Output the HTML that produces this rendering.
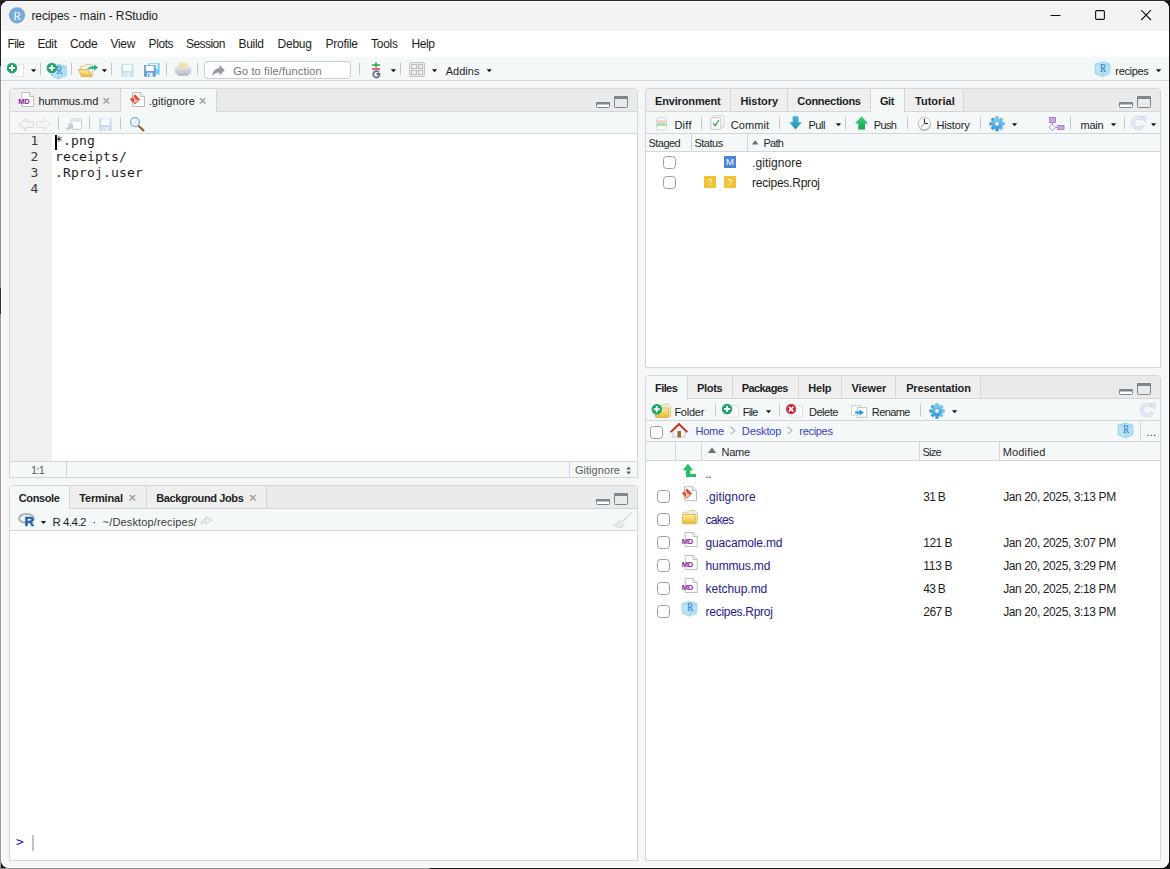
<!DOCTYPE html>
<html lang="en">
<head>
<meta charset="utf-8">
<title>recipes - main - RStudio</title>
<style>
*{box-sizing:border-box;margin:0;padding:0}
html,body{width:1170px;height:869px;overflow:hidden;background:#161617}
body{font-family:"Liberation Sans",sans-serif;font-size:12px;color:#1e1e1e;position:relative}
.a,.t,svg{position:absolute}
svg{overflow:visible}
.t{white-space:nowrap;line-height:14px;height:14px}
#win{position:absolute;left:1px;top:1px;width:1168px;height:867px;background:#f5f6f8;border-radius:8px;overflow:hidden;box-shadow:inset 0 0 0 1px rgba(255,255,255,.9)}
#title{position:absolute;left:0;top:0;width:100%;height:30px;background:#f3f3f3;box-shadow:inset 0 1px 0 #fff,inset 1px 0 0 #fff}
#menu{position:absolute;left:0;top:30px;width:100%;height:26px;background:#fff}
#tb{position:absolute;left:0;top:56px;width:100%;height:24px;background:#f5f8f9;border-bottom:1px solid #d3d7d9}
.pane{position:absolute;border:1px solid #d3d7da;border-radius:4px 4px 0 0;background:#fff;overflow:hidden}
.hdr{position:absolute;left:0;top:0;right:0;height:23px;background:#e9eaeb;border-bottom:1px solid #d3d7da}
.sub{position:absolute;left:0;right:0;top:23px;height:22px;background:#f4f8f9;border-bottom:1px solid #d3d7da}
.tab{position:absolute;top:0;height:22px;border-right:1px solid #d3d7da;background:#efeff0}
.tab.r{border-radius:0 3px 0 0}
.tab.sel{background:#f4f8f9;height:23px}
.sep{position:absolute;width:1px;height:16px;background:linear-gradient(rgba(190,195,199,0),#c3c7cb 22%,#c3c7cb 78%,rgba(190,195,199,0))}
.b{font-weight:bold}
.g{color:#747474}
.s{color:#5c5c5c}
.lnk{color:#25208f}
.crumb{color:#3640c0}
.mono{font-family:"DejaVu Sans Mono","Liberation Mono",monospace;letter-spacing:.174px}
.ln{color:#3a3a3a}
.pr{color:#1414e0}
.x{color:#a3a3a3;font-weight:bold}
.chev{color:#b0b0b0;transform:scaleX(.56);transform-origin:0 50%}
.g2{color:#3c3c3c}
.h{color:#2a2a2a}
.cb{position:absolute;width:13px;height:13px;border:1px solid #9d9d9d;border-radius:3.5px;background:#fff}
.badge{position:absolute;width:12px;height:12px;color:#fff;font-size:9.5px;line-height:12.5px;text-align:center}
</style>
</head>
<body>
<div class="a" style="left:0;top:0;width:1px;height:869px;background:linear-gradient(#232323 0,#232323 66px,#8e8e8e 66px,#8e8e8e 288px,#303030 288px,#303030 314px,#979797 314px)"></div>
<div class="a" style="left:0;top:868px;width:430px;height:1px;background:#8a8a8a"></div>
<div class="a" style="left:0;top:0;width:1169px;height:1px;background:#2b2b2b"></div>
<div id="win">
<div id="title"></div>
<div id="menu"></div>
<div id="tb">
  <div class="a" style="left:203px;top:4px;width:147px;height:18px;background:#fff;border:1px solid #cdd0d2;border-radius:3px"></div>
  <div class="sep" style="left:39px;top:4px"></div>
  <div class="sep" style="left:70px;top:4px"></div>
  <div class="sep" style="left:110px;top:4px"></div>
  <div class="sep" style="left:165px;top:4px"></div>
  <div class="sep" style="left:196px;top:4px"></div>
  <div class="sep" style="left:358px;top:4px"></div>
  <div class="sep" style="left:399px;top:4px"></div>
</div>

<!-- SOURCE PANE  (abs x=9..637, y=88..477) -->
<div class="pane" id="src" style="left:8px;top:87px;width:629px;height:390px">
  <div class="hdr"></div>
  <div class="tab" style="left:0;width:111px"></div>
  <div class="tab sel r" style="left:111px;width:96px"></div>
  <div class="sub"></div>
  <div class="sep" style="left:48px;top:26px"></div>
  <div class="sep" style="left:79px;top:26px"></div>
  <div class="sep" style="left:110px;top:26px"></div>
  <div class="a" style="left:0;top:45px;width:42px;height:327px;background:#f0f0f0"></div>
  <div class="a" style="left:45px;top:46px;width:2px;height:15px;background:#000"></div>
  <div class="a" style="left:0;right:0;top:372px;height:16px;background:#f4f8f9;border-top:1px solid #d3d7da"></div>
  <div class="a" style="left:56px;top:373px;width:1px;height:15px;background:#d3d7da"></div>
  <div class="a" style="left:559px;top:373px;width:1px;height:15px;background:#d3d7da"></div>
</div>

<!-- CONSOLE PANE (abs x=9..637, y=485..860) -->
<div class="pane" id="con" style="left:8px;top:484px;width:629px;height:376px">
  <div class="hdr"></div>
  <div class="tab sel" style="left:0;width:60px"></div>
  <div class="tab" style="left:60px;width:77px"></div>
  <div class="tab r" style="left:137px;width:120px"></div>
  <div class="sub"></div>
  <div class="a" style="left:22px;top:349px;width:2px;height:16px;background:#c4c4c4"></div>
</div>

<!-- GIT PANE (abs x=645..1160, y=88..367) -->
<div class="pane" id="git" style="left:644px;top:87px;width:516px;height:280px">
  <div class="hdr"></div>
  <div class="tab" style="left:0;width:85px"></div>
  <div class="tab" style="left:85px;width:57px"></div>
  <div class="tab" style="left:142px;width:83px"></div>
  <div class="tab sel" style="left:225px;width:34px"></div>
  <div class="tab r" style="left:259px;width:59px"></div>
  <div class="sub"></div>
  <div class="sep" style="left:55px;top:26px"></div>
  <div class="sep" style="left:133px;top:26px"></div>
  <div class="sep" style="left:199px;top:26px"></div>
  <div class="sep" style="left:261px;top:26px"></div>
  <div class="sep" style="left:334px;top:26px"></div>
  <div class="sep" style="left:424px;top:26px"></div>
  <div class="sep" style="left:478px;top:26px"></div>
  <div class="a" style="left:0;right:0;top:45px;height:18px;background:#f4f8f9;border-bottom:1px solid #d3d7da"></div>
  <div class="a" style="left:45px;top:45px;width:1px;height:17px;background:#d3d7da"></div>
  <div class="a" style="left:101px;top:45px;width:1px;height:17px;background:#d3d7da"></div>
  <div class="cb" style="left:17px;top:67px"></div>
  <div class="cb" style="left:17px;top:87px"></div>
  <div class="badge" style="left:78px;top:67px;background:#4c84d9">M</div>
  <div class="badge" style="left:58px;top:87px;background:#f1c232">?</div>
  <div class="badge" style="left:78px;top:87px;background:#f1c232">?</div>
</div>

<!-- FILES PANE (abs x=645..1160, y=375..860) -->
<div class="pane" id="fil" style="left:644px;top:374px;width:516px;height:486px">
  <div class="hdr"></div>
  <div class="tab sel" style="left:0;width:42px"></div>
  <div class="tab" style="left:42px;width:45px"></div>
  <div class="tab" style="left:87px;width:66px"></div>
  <div class="tab" style="left:153px;width:43px"></div>
  <div class="tab" style="left:196px;width:54px"></div>
  <div class="tab r" style="left:250px;width:85px"></div>
  <div class="sub"></div>
  <div class="sep" style="left:69px;top:26px"></div>
  <div class="sep" style="left:133px;top:26px"></div>
  <div class="sep" style="left:274px;top:26px"></div>
  <div class="a" style="left:0;right:0;top:45px;height:21px;background:#f4f8f9;border-bottom:1px solid #d3d7da"></div>
  <div class="a" style="left:494px;top:45px;width:1px;height:20px;background:#d3d7da"></div>
  <div class="a" style="left:0;right:0;top:66px;height:19px;background:#f4f8f9;border-bottom:1px solid #d3d7da"></div>
  <div class="a" style="left:29px;top:66px;width:1px;height:18px;background:#d3d7da"></div>
  <div class="a" style="left:55px;top:66px;width:1px;height:18px;background:#d3d7da"></div>
  <div class="a" style="left:273px;top:66px;width:1px;height:18px;background:#d3d7da"></div>
  <div class="a" style="left:353px;top:66px;width:1px;height:18px;background:#d3d7da"></div>
  <div class="cb" style="left:4px;top:50px"></div>
  <div class="cb" style="left:11px;top:114px"></div>
  <div class="cb" style="left:11px;top:137px"></div>
  <div class="cb" style="left:11px;top:160px"></div>
  <div class="cb" style="left:11px;top:183px"></div>
  <div class="cb" style="left:11px;top:206px"></div>
  <div class="cb" style="left:11px;top:229px"></div>
</div>

<!-- ICONS -->
<svg style="left:-1px;top:-1px" width="1170" height="869" viewBox="0 0 1170 869">
<defs>
  <linearGradient id="gFold" x1="0" y1="0" x2="0" y2="1"><stop offset="0" stop-color="#f9efa2"/><stop offset="1" stop-color="#ecb930"/></linearGradient>
  <linearGradient id="gGear" x1="0" y1="0" x2="0" y2="1"><stop offset="0" stop-color="#7ccbf1"/><stop offset="1" stop-color="#3a9ad6"/></linearGradient>
  <linearGradient id="gPull" x1="0" y1="0" x2="0" y2="1"><stop offset="0" stop-color="#45b8d6"/><stop offset="1" stop-color="#1f95ad"/></linearGradient>
  <linearGradient id="gPush" x1="0" y1="0" x2="0" y2="1"><stop offset="0" stop-color="#3dd07a"/><stop offset="1" stop-color="#0fa858"/></linearGradient>
  <path id="dd" d="M0 0h5.2l-2.6 3z" fill="#151515"/>
  <g id="gp"><circle r="5.2" fill="#119c5a"/><circle r="4.3" fill="none" stroke="#3fc088" stroke-width=".6"/><path d="M-3 0h6M0 -3v6" stroke="#fff" stroke-width="2"/></g>
  <g id="cube">
    <path d="M7.5 .1L14.9 2.3V11.6L7.5 14.75L.2 11.6V2.3z" fill="#bde6f7" stroke="#7fcbe7" stroke-width=".8" stroke-linejoin="round"/>
    <path d="M7.5 4.5L14.9 2.3V11.6L7.5 14.75z" fill="#afe0f5"/>
    <path d="M.2 2.3L7.5 4.5L14.9 2.3M7.5 4.5V14.75" fill="none" stroke="#8fd3ea" stroke-width=".7"/>
    <path d="M.2 11.6L7.5 9.4L14.9 11.6M7.5 9.4V.1" fill="none" stroke="#9fdaee" stroke-width=".5"/>
    <text x="5" y="9.8" font-family="Liberation Serif,serif" font-size="11.5" textLength="6.2" lengthAdjust="spacingAndGlyphs" fill="#3977c6">R</text>
  </g>
  <g id="doc"><path d="M.5 .5H8.5L12.5 4.5V14.5H.5z" fill="#fff" stroke="#bdbdbd"/><path d="M8.5 .5V4.5H12.5" fill="#f4f4f4" stroke="#bdbdbd"/></g>
  <g id="md"><use href="#doc" x="2.5"/><text x="-.4" y="12.2" font-family="Liberation Sans,sans-serif" font-weight="bold" font-size="7.6" letter-spacing="-.5" fill="#8c1d9e">MD</text></g>
  <g id="gitdoc"><use href="#doc" x="2"/><path d="M5 2.2L10.1 7.3L5 12.4L-.1 7.3z" fill="#ee4a2c"/><path d="M3.2 5.2L6.6 8.6M4.9 6.9V9.8" stroke="#fff" stroke-width=".9" fill="none"/><circle cx="3.4" cy="5.4" r=".9" fill="#fff"/><circle cx="6.6" cy="8.6" r=".9" fill="#fff"/><circle cx="4.9" cy="9.8" r=".9" fill="#fff"/></g>
  <g id="floppyD"><path d="M0 0H12.5V12.5H0z" fill="#c9def1"/><path d="M2 .8H10.5V6.5H2z" fill="#fafcfe"/><path d="M3.2 8.6H9.3V12.5H3.2z" fill="#e8f1f9"/><path d="M4.2 9.6H6V12.5H4.2z" fill="#c9def1"/></g>
  <g id="gear">
    <g fill="url(#gGear)" stroke="#3d97d2" stroke-width=".4"><rect x="-1.5" y="-7.4" width="3" height="14.8" rx=".6"/><rect x="-1.5" y="-7.4" width="3" height="14.8" rx=".6" transform="rotate(45)"/><rect x="-1.5" y="-7.4" width="3" height="14.8" rx=".6" transform="rotate(90)"/><rect x="-1.5" y="-7.4" width="3" height="14.8" rx=".6" transform="rotate(135)"/></g>
    <circle r="5.4" fill="url(#gGear)"/>
    <circle r="2.2" fill="#f4f8f9" stroke="#3d97d2" stroke-width=".5"/>
  </g>
  <g id="folder"><path d="M1 4.6V2.7Q1 2.2 1.5 2.2H7.2L8.6 .5H13L15.6 3.3V12.3Q15.6 12.8 15.1 12.8H13.6" fill="#faf6e4" stroke="#d9bc55" stroke-width=".8" stroke-linejoin="round"/><path d="M2 3.2H7.8L9.1 1.5H12.7L14.7 3.7V11.9H13.9V4.2H2z" fill="#e6eaef"/><rect x=".5" y="4.5" width="13.3" height="9.3" rx=".8" fill="url(#gFold)" stroke="#d6ae3c" stroke-width=".8"/></g>
  <g id="minp"><rect x=".5" y=".5" width="13" height="5" rx="1" fill="#fff" stroke="#7c868d"/><rect x="0" y="0" width="14" height="2.4" rx="1" fill="#7c868d"/></g>
  <g id="maxp"><rect x=".5" y=".5" width="13" height="11" rx="1" fill="none" stroke="#7c868d"/><rect x="0" y="0" width="14" height="3" rx="1" fill="#7c868d"/></g>
  <g id="refresh"><path d="M12.3 3.3A6.9 6.9 0 1 0 13.4 11.65L10.9 10.2A4 4 0 1 1 10.2 5.4zM9.4 1.9L14.9 1.3L14.7 7.4z" fill="#c0cadd" stroke="#c0cadd" stroke-width=".9" stroke-linejoin="round"/><path d="M12.3 3.3A6.9 6.9 0 1 0 13.4 11.65L10.9 10.2A4 4 0 1 1 10.2 5.4zM9.4 1.9L14.9 1.3L14.7 7.4z" fill="#e3e9f4"/></g>
  <path id="sort" d="M0 5.5L4.2 0L8.4 5.5z" fill="#6d6f77"/>
</defs>

<!-- title bar -->
<circle cx="17" cy="15.3" r="8.1" fill="#75aadb"/>
<text x="17.2" y="19.5" font-family="Liberation Serif,serif" font-size="11.8" text-anchor="middle" fill="#fff" opacity=".95">R</text>
<path d="M1050.5 15.5H1060.5" stroke="#111" stroke-width="1"/>
<rect x="1095.6" y="10.6" width="8.8" height="8.8" rx="1.2" fill="none" stroke="#111" stroke-width="1.1"/>
<path d="M1141.2 10.2L1151 20M1151 10.2L1141.2 20" stroke="#111" stroke-width="1.1"/>

<!-- main toolbar -->
<rect x="12.5" y="64.5" width="11" height="12" fill="#fff" stroke="#e3e3e3"/>
<use href="#gp" x="12" y="68"/>
<use href="#dd" x="31" y="69.2"/>
<use href="#cube" x="51.2" y="64.2"/>
<use href="#gp" x="51.8" y="68"/>
<!-- open folder -->
<g transform="translate(78,64)">
  <path d="M2.4 6V3Q2.4 2.3 3.1 2.3H6.2L7.8 .6H13Q14.4 .6 14.4 1.7V12" fill="#faf8ef" stroke="#d9b95a" stroke-width=".8"/>
  <path d="M4 3.6H7L8.4 2H13V10H4z" fill="#eceef2"/>
  <path d="M.5 5.6H10.1L14.3 12.6H3.5z" fill="url(#gFold)" stroke="#d4a93a" stroke-width=".8" stroke-linejoin="round"/>
  <path d="M9.3 5.5C10.6 3.3 12.8 2.2 16.2 2.3V.5L20 3.5L16.2 6.8V4.9C13.6 4.6 11.4 4.8 9.3 5.5z" fill="#1db385"/>
</g>
<use href="#dd" x="101.8" y="69.2"/>
<use href="#floppyD" x="121.2" y="64.2"/>
<!-- save all -->
<g transform="translate(144,63.2)">
  <path d="M4.4 0H15.7V11.3H4.4z" fill="#79cdef"/><path d="M6 .7H13.6V5.5H6z" fill="#e9f7fd"/>
  <path d="M0 1.9H11.6V13.5H0z" fill="#689fd8"/><path d="M1.8 2.6H9.8V7.8H1.8z" fill="#fff"/><path d="M3 9.6H8.6V13.5H3z" fill="#eaf2fa"/><path d="M3.9 10.5H5.6V13.5H3.9z" fill="#689fd8"/>
</g>
<!-- printer -->
<g transform="translate(174.8,62.2)">
  <path d="M3.7 0H13.1V7H3.7z" fill="#f1dfb0"/><path d="M3.7 0H13.1V1.2H3.7z" fill="#f6e9c6"/>
  <rect x="0" y="4.6" width="16.4" height="7.2" rx="2.6" fill="#d6dce7"/>
  <path d="M3 4.6H13.8V6.6H3z" fill="#f1dfb0" opacity=".85"/>
  <path d="M.4 8.4H16V10.4Q16 11.8 14 11.8H2.4Q.4 11.8 .4 10.4z" fill="#c5cbd8"/>
  <rect x="2.6" y="11.4" width="11.2" height="2.2" rx=".8" fill="#b4b8c2"/>
</g>
<!-- goto arrow -->
<path d="M212.2 76.4C212.6 71 216 68 219.4 68V64.8L224.8 70.2L219.4 75.4V72.4C216.4 72.2 213.8 73.6 212.2 76.4z" fill="#9799a6"/>
<!-- git (vcs) -->
<path d="M372 65H380M376 62.3V67.6" stroke="#2aa84a" stroke-width="1.7"/>
<path d="M372 69H380" stroke="#d9363a" stroke-width="1.6"/>
<path d="M379 72.4A3.2 3.2 0 1 0 379.4 75.4V74H376.4" fill="none" stroke="#65758a" stroke-width="1.8"/>
<use href="#dd" x="390.8" y="69.2"/>
<!-- panes grid -->
<rect x="409.5" y="62.5" width="15" height="14" rx="1.6" fill="#ebebee" stroke="#c4c4c9" stroke-width="1"/>
<path d="M411.5 64.5h5v4h-5zM418.5 64.5h4v4h-4zM411.5 70.5h5v4h-5zM418.5 70.5h4v4h-4z" fill="#efeff2" stroke="#bcbcc1" stroke-width="1" shape-rendering="crispEdges"/>
<use href="#dd" x="432" y="69.2"/>
<use href="#dd" x="486.6" y="69.2"/>
<use href="#cube" x="1095" y="61.8"/>
<use href="#dd" x="1156" y="69.2"/>

<!-- source pane -->
<use href="#md" x="18.7" y="92"/>
<use href="#gitdoc" x="130" y="92"/>
<path d="M19.3 124.6L26 118.6V121.8H33.6V127.4H26V130.6z" fill="#f3f3f3" stroke="#cfcfcf" stroke-width=".9"/>
<path d="M50.7 124.6L44 118.6V121.8H36.6V127.4H44V130.6z" fill="#f6f6f6" stroke="#dcdcdc" stroke-width=".9"/>
<g transform="translate(66,118.4)">
  <rect x="4.9" y=".5" width="10.6" height="10.4" rx="1.8" fill="#fafcfd" stroke="#c3ccd5"/>
  <path d="M5.4 3.4V2.3Q5.4 1 6.7 1H13.7Q15 1 15 2.3V3.4z" fill="#d5e4f1"/>
  <path d="M.6 10.2L3.6 7.2L2.2 5.8H6.6V10.2L5.2 8.8L2.2 11.8z" fill="#c9ced6" stroke="#aab0ba" stroke-width=".5"/>
</g>
<use href="#floppyD" x="99.2" y="118.4"/>
<!-- magnifier -->
<path d="M138.4 125.8L143.4 130.4" stroke="#9b602b" stroke-width="2.2" stroke-linecap="round"/>
<circle cx="135" cy="122.1" r="4.5" fill="#e6f1fa" stroke="#7fadd6" stroke-width="1.2"/>
<path d="M132.4 121A2.8 2.8 0 0 1 135 119.2" fill="none" stroke="#fff" stroke-width="1.1"/>
<use href="#minp" x="596" y="102"/>
<use href="#maxp" x="614" y="96"/>
<!-- status updown -->
<path d="M626.2 469.4L628.6 466.4L631 469.4zM626.2 471.6L628.6 474.6L631 471.6z" fill="#5f5f5f"/>

<!-- console pane -->
<ellipse cx="26.4" cy="518.4" rx="7.3" ry="4.4" fill="none" stroke="#b1b3b7" stroke-width="2.2"/>
<text x="24.6" y="525.7" font-family="Liberation Sans,sans-serif" font-weight="bold" font-size="13.2" fill="#1f63b5" stroke="#1f63b5" stroke-width=".5">R</text>
<use href="#dd" x="40.9" y="521"/>
<path d="M201 524.4C201.4 521 203.6 519.4 206.2 519.4V516.6L211.8 520.4L206.2 524V521.6C204 521.6 202.4 522.4 201 524.4z" fill="#f2f2f2" stroke="#c4c4c4" stroke-width=".8" stroke-linejoin="round"/>
<use href="#minp" x="596" y="499"/>
<use href="#maxp" x="614" y="493"/>
<!-- broom -->
<g opacity=".8"><path d="M631.6 512.6L622.6 521.4" stroke="#c9ccd0" stroke-width="1.3"/><path d="M619.4 520L624 524.6L621.6 528L613.2 525.4C616.4 524.6 618.2 522.6 619.4 520z" fill="#e3e5e8" stroke="#c3c6ca" stroke-width=".7"/></g>

<!-- git pane -->
<g transform="translate(656,117.4)"><rect x=".5" y=".5" width="10" height="12" rx="1.2" fill="#fff" stroke="#d4d4d4"/><path d="M1.2 2.8H9.8V5.3H1.2z" fill="#f6c9c9"/><path d="M1.2 5.6H9.8V8.6H1.2z" fill="#a9dfa9"/></g>
<g transform="translate(710.4,115.2)"><rect x="3.5" y=".5" width="10" height="11.6" rx="1" fill="#fff" stroke="#cfcfcf"/><rect x=".5" y="2.5" width="10" height="11.6" rx="1" fill="#fff" stroke="#c4c4c4"/><path d="M2.8 8L4.8 10.4L8.6 4.8" fill="none" stroke="#3f9b3f" stroke-width="1.3"/></g>
<path d="M792.6 116.2H798.5V122.2H801.9L795.55 129.5L789.2 122.2H792.6z" fill="url(#gPull)"/>
<use href="#dd" x="835.8" y="123.3"/>
<path d="M861.6 116.2L868.1 123.4H865V129.6H858.3V123.4H855.1z" fill="url(#gPush)"/>
<g><circle cx="924.4" cy="123.6" r="6.2" fill="#fbfbfb" stroke="#b9b9b9" stroke-width=".9"/><path d="M919 127.5A6.2 6.2 0 0 0 930.4 125.4" fill="none" stroke="#a3a3a3" stroke-width=".9"/><path d="M924.4 118.8V123.6H928.2" fill="none" stroke="#222" stroke-width="1"/><path d="M924.4 123.6L920.9 127.2" stroke="#e35b5b" stroke-width=".9"/></g>
<use href="#gear" x="997" y="123.8"/>
<use href="#dd" x="1012" y="123.3"/>
<g fill="#c8a8de" stroke="#a070c4" stroke-width=".8"><rect x="1049.4" y="117.4" width="6.2" height="5"/><rect x="1057.8" y="125.4" width="6.2" height="4.2"/><path d="M1052.5 124.2L1055.7 127.4L1052.5 130.6L1049.3 127.4z" fill="#fff"/><path d="M1052.5 122.4V124.2M1055.7 127.4H1057.8" fill="none"/></g>
<use href="#dd" x="1111" y="123.3"/>
<use href="#refresh" x="1131" y="114.8"/>
<use href="#dd" x="1151" y="123.3"/>
<use href="#minp" x="1119" y="102"/>
<use href="#maxp" x="1137" y="96"/>
<use href="#sort" x="751.8" y="140.2" transform="translate(150.4 28) scale(.8)"/>

<!-- files pane -->
<use href="#minp" x="1119" y="389"/>
<use href="#maxp" x="1137" y="383"/>
<g transform="translate(655,403.6)"><use href="#folder"/></g>
<use href="#gp" x="656.8" y="409.3"/>
<rect x="727.9" y="405.5" width="10.6" height="11.6" fill="#fff" stroke="#e0e0e0"/>
<use href="#gp" x="727.1" y="409"/>
<use href="#dd" x="766" y="410.3"/>
<rect x="791.5" y="405.5" width="11" height="11.6" fill="#fff" stroke="#e0e0e0"/>
<circle cx="791.1" cy="409.1" r="5.1" fill="#c4152c"/><circle cx="791.1" cy="409.1" r="4.2" fill="none" stroke="#e56a78" stroke-width=".6"/>
<path d="M788.9 406.9L793.3 411.3M793.3 406.9L788.9 411.3" stroke="#fff" stroke-width="1.8"/>
<g><rect x="851.5" y="405.5" width="9" height="9.6" fill="#fff" stroke="#cfcfcf"/><rect x="857.5" y="407.5" width="9.2" height="9.8" fill="#fff" stroke="#c4c4c4"/><path d="M855 411.4H859.4V409.6L863.8 412.5L859.4 415.4V413.6H855z" fill="#1d9ae6"/></g>
<use href="#gear" x="937" y="411"/>
<use href="#dd" x="952" y="410.3"/>
<use href="#refresh" x="1140" y="401.8"/>
<!-- home -->
<g><path d="M672.8 431.4V437.3H685.2V431.4L679 425.6z" fill="#f3f3f3" stroke="#b9b9b9" stroke-width=".7"/><path d="M677.4 431H681V437.3H677.4z" fill="#a8672f"/><path d="M670.6 432.2L679 424L687.4 432.2" fill="none" stroke="#c3301c" stroke-width="1.8" stroke-linejoin="miter"/></g>
<use href="#cube" x="1118" y="423"/>
<use href="#sort" x="707.8" y="447.4"/>
<!-- up arrow -->
<path d="M687.9 463.8L693.2 470.2H690.3V474.1H696V477H686V470.2H682.8z" fill="#22c064"/>
<use href="#gitdoc" x="682" y="486.2"/>
<use href="#folder" x="682" y="510"/>
<use href="#md" x="682.2" y="532"/>
<use href="#md" x="682.2" y="555"/>
<use href="#md" x="682.2" y="578"/>
<use href="#cube" x="682" y="601.4"/>
</svg>

<!-- TEXT -->
<span class="t" style="left:30.4px;top:8.03px;letter-spacing:-0.092px">recipes - main - RStudio</span>
<span class="t" style="left:6.6px;top:36.03px;letter-spacing:-0.648px">File</span>
<span class="t" style="left:36.4px;top:36.03px;letter-spacing:-0.362px">Edit</span>
<span class="t" style="left:69px;top:36.03px;letter-spacing:-0.363px">Code</span>
<span class="t" style="left:109.4px;top:36.03px;letter-spacing:-0.266px">View</span>
<span class="t" style="left:147.6px;top:36.03px;letter-spacing:-0.422px">Plots</span>
<span class="t" style="left:185px;top:36.03px;letter-spacing:-0.551px">Session</span>
<span class="t" style="left:237.5px;top:36.03px;letter-spacing:-0.297px">Build</span>
<span class="t" style="left:276.5px;top:36.03px;letter-spacing:-0.219px">Debug</span>
<span class="t" style="left:324.5px;top:36.03px;letter-spacing:-0.253px">Profile</span>
<span class="t" style="left:370px;top:36.03px;letter-spacing:-0.254px">Tools</span>
<span class="t" style="left:410.5px;top:36.03px;letter-spacing:-0.396px">Help</span>
<span class="t g" style="left:232.2px;top:63.36px;font-size:11px;letter-spacing:0.161px">Go to file/function</span>
<span class="t" style="left:444.7px;top:63.36px;font-size:11px;letter-spacing:0.012px">Addins</span>
<span class="t" style="left:1114.3px;top:63.36px;font-size:11px;letter-spacing:-0.328px">recipes</span>
<span class="t" style="left:37.5px;top:93.36px;font-size:11px;letter-spacing:-0.091px">hummus.md</span>
<span class="t x" style="left:101.6px;top:92.7px;font-size:13px">×</span>
<span class="t" style="left:147.7px;top:93.36px;font-size:11px;letter-spacing:0.104px">.gitignore</span>
<span class="t x" style="left:197.8px;top:92.7px;font-size:13px">×</span>
<span class="t s" style="left:30px;top:462.36px;font-size:11px;letter-spacing:-0.750px">1:1</span>
<span class="t s" style="left:573.9px;top:462.36px;font-size:11px;letter-spacing:0.057px">Gitignore</span>
<span class="t mono ln" style="left:29.5px;top:132.7px;font-size:13px">1</span>
<span class="t mono" style="left:54px;top:132.7px;font-size:13px">*.png</span>
<span class="t mono ln" style="left:29.5px;top:148.7px;font-size:13px">2</span>
<span class="t mono" style="left:54px;top:148.7px;font-size:13px">receipts/</span>
<span class="t mono ln" style="left:29.5px;top:164.7px;font-size:13px">3</span>
<span class="t mono" style="left:54px;top:164.7px;font-size:13px">.Rproj.user</span>
<span class="t mono ln" style="left:29.5px;top:180.7px;font-size:13px">4</span>
<span class="t b" style="left:17.8px;top:490.36px;font-size:11px;letter-spacing:-0.401px">Console</span>
<span class="t b" style="left:78.3px;top:490.36px;font-size:11px;letter-spacing:-0.190px">Terminal</span>
<span class="t x" style="left:127.6px;top:490.2px;font-size:13px">×</span>
<span class="t b" style="left:155.2px;top:490.36px;font-size:11px;letter-spacing:-0.379px">Background Jobs</span>
<span class="t x" style="left:247.9px;top:490.2px;font-size:13px">×</span>
<span class="t" style="left:51.5px;top:514.2px;font-size:11.5px;letter-spacing:-0.513px">R 4.4.2</span>
<span class="t" style="left:91.6px;top:514.36px;font-size:11px">·</span>
<span class="t g2" style="left:101.6px;top:513.86px;font-size:11px;letter-spacing:0.153px">~/Desktop/recipes/</span>
<span class="t mono pr" style="left:15px;top:833.7px;font-size:13px">&gt;</span>
<span class="t b" style="left:654px;top:93.36px;font-size:11px;letter-spacing:-0.153px">Environment</span>
<span class="t b" style="left:739.4px;top:93.36px;font-size:11px;letter-spacing:-0.018px">History</span>
<span class="t b" style="left:796.3px;top:93.36px;font-size:11px;letter-spacing:-0.292px">Connections</span>
<span class="t b" style="left:879px;top:93.36px;font-size:11px;letter-spacing:-0.441px">Git</span>
<span class="t b" style="left:914px;top:93.36px;font-size:11px;letter-spacing:0.026px">Tutorial</span>
<span class="t" style="left:673.4px;top:116.86px;font-size:11px;letter-spacing:0.263px">Diff</span>
<span class="t" style="left:729.7px;top:116.86px;font-size:11px;letter-spacing:0.082px">Commit</span>
<span class="t" style="left:807.4px;top:116.86px;font-size:11px;letter-spacing:-0.415px">Pull</span>
<span class="t" style="left:872.8px;top:116.86px;font-size:11px;letter-spacing:-0.626px">Push</span>
<span class="t" style="left:935.5px;top:116.86px;font-size:11px;letter-spacing:-0.172px">History</span>
<span class="t" style="left:1079.5px;top:116.86px;font-size:11px;letter-spacing:-0.248px">main</span>
<span class="t h" style="left:647.5px;top:134.86px;font-size:11px;letter-spacing:-0.535px">Staged</span>
<span class="t h" style="left:693.4px;top:134.86px;font-size:11px;letter-spacing:-0.477px">Status</span>
<span class="t h" style="left:762.4px;top:134.86px;font-size:11px;letter-spacing:-0.680px">Path</span>
<span class="t" style="left:751px;top:154.53px;letter-spacing:0.069px">.gitignore</span>
<span class="t" style="left:751px;top:174.53px;letter-spacing:-0.225px">recipes.Rproj</span>
<span class="t b" style="left:654px;top:380.36px;font-size:11px;letter-spacing:-0.570px">Files</span>
<span class="t b" style="left:696px;top:380.36px;font-size:11px;letter-spacing:-0.302px">Plots</span>
<span class="t b" style="left:740.8px;top:380.36px;font-size:11px;letter-spacing:-0.595px">Packages</span>
<span class="t b" style="left:807.2px;top:380.36px;font-size:11px;letter-spacing:-0.148px">Help</span>
<span class="t b" style="left:850.6px;top:380.36px;font-size:11px;letter-spacing:-0.136px">Viewer</span>
<span class="t b" style="left:905.2px;top:380.36px;font-size:11px;letter-spacing:-0.176px">Presentation</span>
<span class="t" style="left:673.4px;top:404.36px;font-size:11px;letter-spacing:-0.237px">Folder</span>
<span class="t" style="left:741.7px;top:404.36px;font-size:11px;letter-spacing:-0.678px">File</span>
<span class="t" style="left:807.9px;top:404.36px;font-size:11px;letter-spacing:-0.459px">Delete</span>
<span class="t" style="left:870.8px;top:404.36px;font-size:11px;letter-spacing:-0.596px">Rename</span>
<span class="t crumb" style="left:694.5px;top:423.36px;font-size:11px;letter-spacing:-0.281px">Home</span>
<span class="t crumb" style="left:740.8px;top:423.36px;font-size:11px;letter-spacing:-0.110px">Desktop</span>
<span class="t crumb" style="left:798.3px;top:423.36px;font-size:11px;letter-spacing:-0.311px">recipes</span>
<span class="t chev" style="left:728.6px;top:423.38px;font-size:17px">&gt;</span>
<span class="t chev" style="left:786.4px;top:423.38px;font-size:17px">&gt;</span>
<span class="t" style="left:1145.5px;top:424.36px;font-size:11px;letter-spacing:0.164px">...</span>
<span class="t h" style="left:720.5px;top:444.36px;font-size:11px;letter-spacing:-0.281px">Name</span>
<span class="t h" style="left:921.4px;top:444.36px;font-size:11px;letter-spacing:-0.750px">Size</span>
<span class="t h" style="left:1001.7px;top:444.36px;font-size:11px;letter-spacing:0.160px">Modified</span>
<span class="t lnk" style="left:704.3px;top:466.03px;letter-spacing:-0.750px">..</span>
<span class="t lnk" style="left:704.6px;top:489.03px;letter-spacing:0.069px">.gitignore</span>
<span class="t" style="left:922.3px;top:489.03px;letter-spacing:-0.750px">31 B</span>
<span class="t" style="left:1002.2px;top:489.03px;letter-spacing:-0.388px">Jan 20, 2025, 3:13 PM</span>
<span class="t lnk" style="left:704.6px;top:512.03px;letter-spacing:-0.740px">cakes</span>
<span class="t lnk" style="left:704.6px;top:535.03px;letter-spacing:-0.174px">guacamole.md</span>
<span class="t" style="left:922.3px;top:535.03px;letter-spacing:-0.515px">121 B</span>
<span class="t" style="left:1002.2px;top:535.03px;letter-spacing:-0.388px">Jan 20, 2025, 3:07 PM</span>
<span class="t lnk" style="left:704.6px;top:558.03px;letter-spacing:-0.154px">hummus.md</span>
<span class="t" style="left:922.3px;top:558.03px;letter-spacing:-0.292px">113 B</span>
<span class="t" style="left:1002.2px;top:558.03px;letter-spacing:-0.388px">Jan 20, 2025, 3:29 PM</span>
<span class="t lnk" style="left:704.6px;top:581.03px;letter-spacing:-0.039px">ketchup.md</span>
<span class="t" style="left:922.3px;top:581.03px;letter-spacing:-0.750px">43 B</span>
<span class="t" style="left:1002.2px;top:581.03px;letter-spacing:-0.388px">Jan 20, 2025, 2:18 PM</span>
<span class="t lnk" style="left:704.6px;top:604.03px;letter-spacing:-0.284px">recipes.Rproj</span>
<span class="t" style="left:922.3px;top:604.03px;letter-spacing:-0.515px">267 B</span>
<span class="t" style="left:1002.2px;top:604.03px;letter-spacing:-0.388px">Jan 20, 2025, 3:13 PM</span>
</div>
</body>
</html>
